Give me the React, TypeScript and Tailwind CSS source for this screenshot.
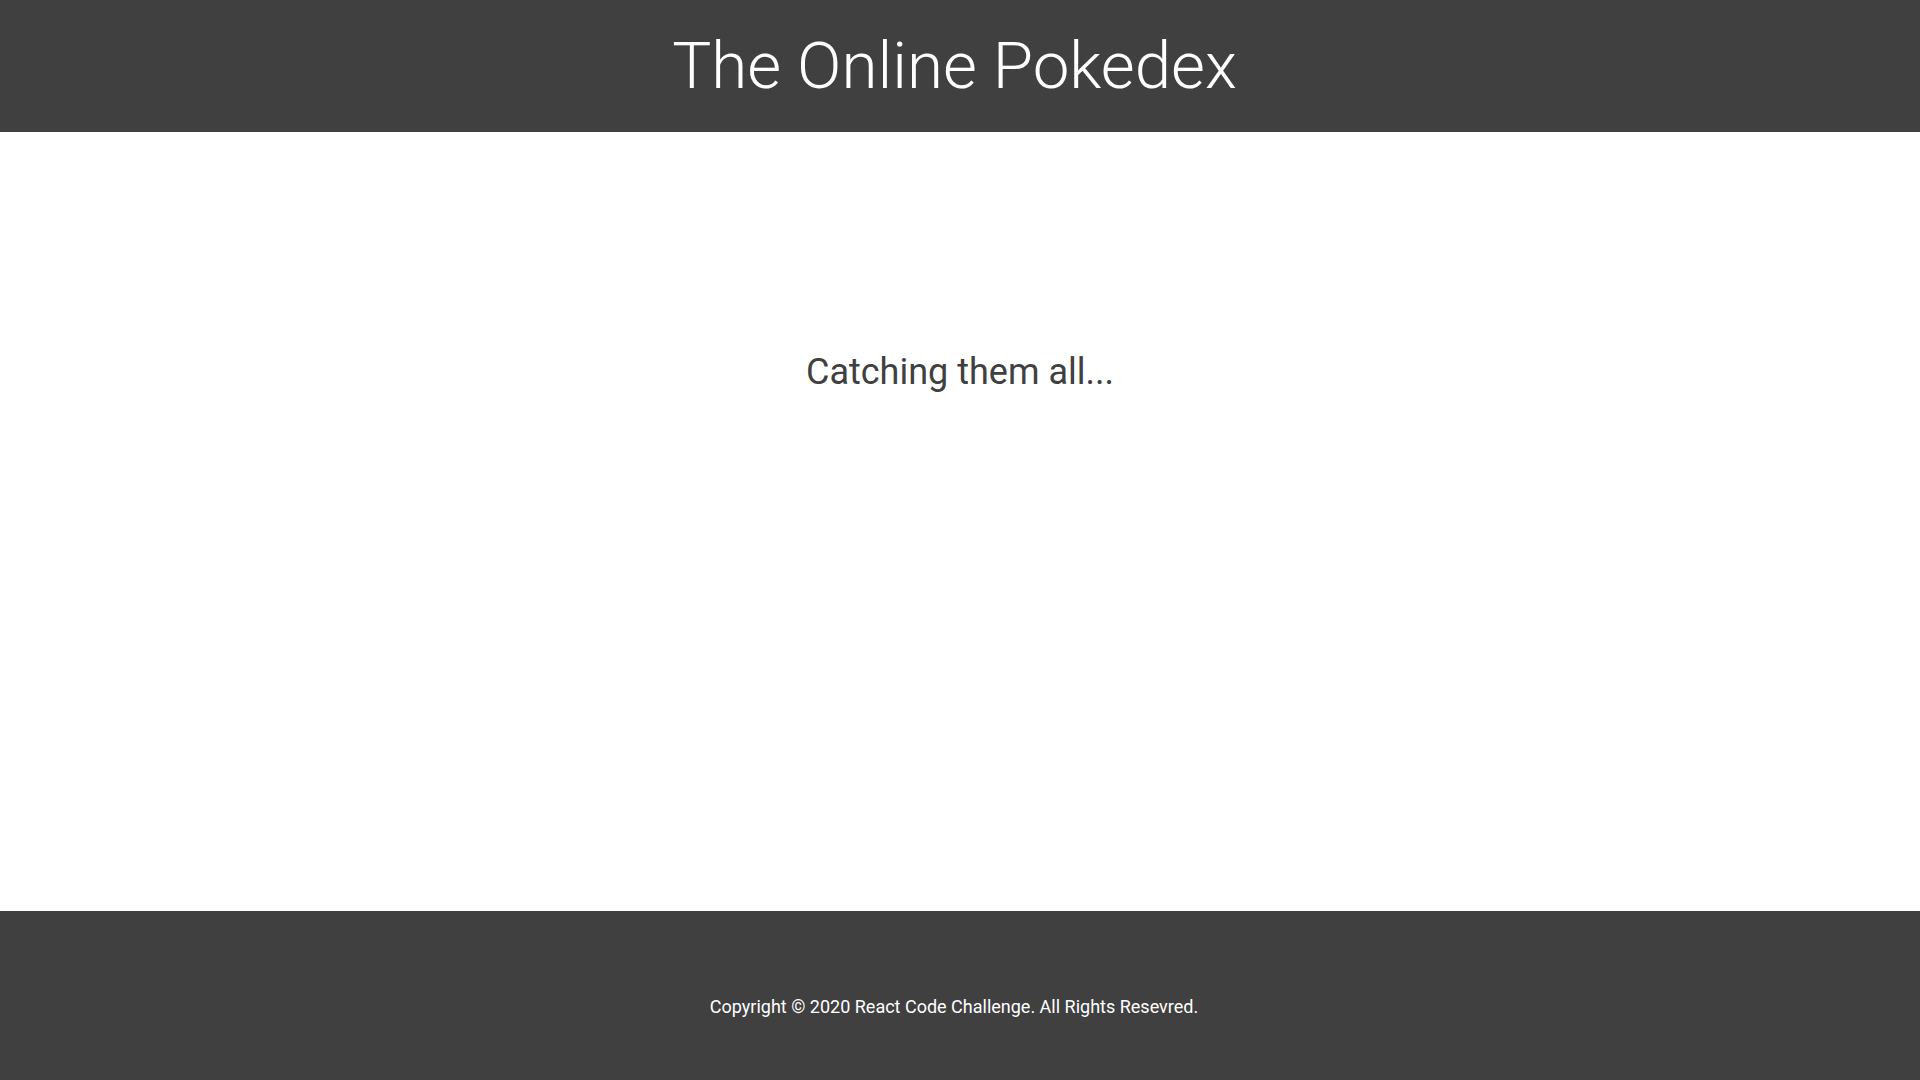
export default function App() {
  return (
    <div className="flex min-h-screen flex-col bg-white font-['Roboto',sans-serif]">
      <header className="flex h-[132px] items-center justify-center bg-[#404040] pr-[11px]">
        <h1 className="text-[65.5px] font-light leading-none text-white">
          The Online Pokedex
        </h1>
      </header>

      <main className="flex h-[779px] flex-col items-center pt-[218px]">
        <p className="text-[36px] leading-[44px] text-[#404040]">
          Catching them all...
        </p>
      </main>

      <footer className="flex h-[169px] items-center justify-center bg-[#404040] pt-[22px] pr-[12px]">
        <p className="text-[18px] leading-6 text-white">
          Copyright © 2020 React Code Challenge. All Rights Resevred.
        </p>
      </footer>
    </div>
  );
}
